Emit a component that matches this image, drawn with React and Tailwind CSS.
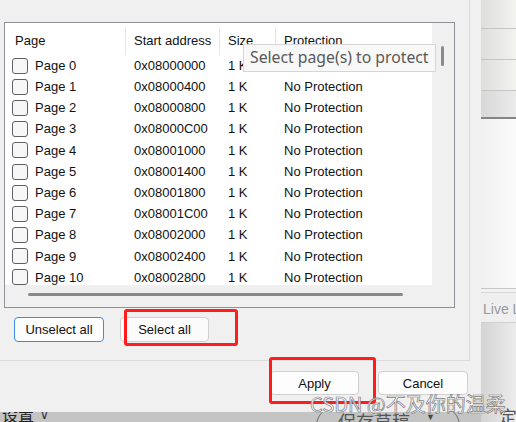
export default function App() {
  const rows = [
    ["Page 0", "0x08000000"],
    ["Page 1", "0x08000400"],
    ["Page 2", "0x08000800"],
    ["Page 3", "0x08000C00"],
    ["Page 4", "0x08001000"],
    ["Page 5", "0x08001400"],
    ["Page 6", "0x08001800"],
    ["Page 7", "0x08001C00"],
    ["Page 8", "0x08002000"],
    ["Page 9", "0x08002400"],
    ["Page 10", "0x08002800"],
  ];
  return (
    <div className="relative w-[516px] h-[422px] overflow-hidden bg-[#f0f0f0] flex font-['Liberation_Sans',Arial,sans-serif] text-[13px] text-[#111]">
      {/* left column: dialog + dimmed page below */}
      <div className="w-[481px] shrink-0 flex flex-col">
        <div className="h-[412px] flex flex-col bg-[#f0f0f0]">
          {/* panel */}
          <div className="h-[361px] w-[470px] border-r border-b border-[#dcdcdc] flex flex-col pl-[4px] pt-[22px]">
            <div className="w-[451px] h-[286px] border border-[#8f9196] flex flex-col bg-[#f0f0f0]">
              <div className="flex h-[262px]">
                <div className="w-[427px] bg-white overflow-hidden">
                  {/* header */}
                  <div className="flex h-[32px] pt-[4px]">
                    <div className="w-[121px] border-r border-[#e5e5e5] pl-[10px] flex items-center">Page</div>
                    <div className="w-[94px] border-r border-[#e5e5e5] pl-[8px] flex items-center">Start address</div>
                    <div className="w-[56px] border-r border-[#e5e5e5] pl-[8px] flex items-center">Size</div>
                    <div className="flex-1 pl-[8px] flex items-center">Protection</div>
                  </div>
                  {rows.map(([p, a]) => (
                    <div key={p} className="flex h-[21.2px] items-center">
                      <div className="w-[121px] pl-[7px] flex items-center gap-[7px]">
                        <div className="w-[16px] h-[16px] rounded-[3px] border border-[#5f5f5f] bg-[#f7f7f7]" />
                        <span>{p}</span>
                      </div>
                      <div className="w-[94px] pl-[8px]">{a}</div>
                      <div className="w-[56px] pl-[8px]">1 K</div>
                      <div className="flex-1 pl-[8px]">No Protection</div>
                    </div>
                  ))}
                </div>
                <div className="flex-1 pt-[23px] pl-[9px]">
                  <div className="w-[3px] h-[20px] rounded-full bg-[#8a8a8a]" />
                </div>
              </div>
              <div className="flex-1 pt-[8px] pl-[23px]">
                <div className="w-[375px] h-[3px] rounded-full bg-[#8a8a8a]" />
              </div>
            </div>
            <div className="flex mt-[9px] ml-[10px] gap-[16px]">
              <div className="w-[90px] h-[25px] rounded-[4px] border border-[#3a8ee6] bg-[#fdfdfd] flex items-center justify-center">Unselect all</div>
              <div className="w-[89px] h-[25px] rounded-[4px] border border-[#d0d0d0] bg-[#fbfbfb] flex items-center justify-center">Select all</div>
            </div>
          </div>
          {/* footer */}
          <div className="flex justify-end pr-[13px] pt-[10px] gap-[19px]">
            <div className="w-[89px] h-[24px] rounded-[4px] border border-[#d0d0d0] bg-[#fdfdfd] flex items-center justify-center pt-[1px]">Apply</div>
            <div className="w-[90px] h-[24px] rounded-[4px] border border-[#d0d0d0] bg-[#fdfdfd] flex items-center justify-center pt-[1px]">Cancel</div>
          </div>
        </div>
        {/* dimmed page strip */}
        <div className="relative h-[10px] bg-[#c4c4c4] overflow-hidden flex">
          <div className="-mt-[6px] ml-[2px] text-[16px] leading-[16px] text-[#222] font-['Noto_Sans_CJK_SC',sans-serif]">设置</div>
          <div className="-mt-[6px] ml-[6px] text-[12px] text-[#333]">∨</div>
          <div className="absolute left-[316px] top-[-6px] w-[144px] h-[40px] rounded-full border border-[#6a6a6a]" />
          <div className="absolute left-[338px] top-[0px] text-[18px] leading-[18px] text-[#555] font-['Noto_Sans_CJK_SC',sans-serif]">保存草稿</div>
          <div className="absolute left-[426px] top-[-1px] text-[9px] text-[#444]">▼</div>
        </div>
      </div>
      {/* right window strip */}
      <div className="flex-1 min-w-0 flex flex-col">
        <div className="h-[29px] shrink-0 bg-gradient-to-r from-[#dedede] to-[#f3f3f0] border-b border-[#c6c6c6]" />
        <div className="h-[31px] shrink-0 bg-gradient-to-r from-[#dedede] to-[#f3f3f0] border-b border-[#c6c6c6]" />
        <div className="h-[31px] shrink-0 bg-gradient-to-r from-[#dedede] to-[#f3f3f0] border-b border-[#c6c6c6]" />
        <div className="h-[28px] shrink-0 bg-gradient-to-r from-[#d8d8d8] to-[#ebebeb] border-b-2 border-[#858585]" />
        <div className="h-[170px] shrink-0 bg-gradient-to-r from-[#f0f0f0] to-[#fbfbfb] border-b border-[#c8c8c8]" />
        <div className="h-[4px] shrink-0 border-b border-[#d6d6d6] bg-[#f2f2f2]" />
        <div className="h-[30px] shrink-0 bg-[#efefef] border-b border-[#d0d0d0] flex items-center pt-[4px] pl-[2px] text-[14px] text-[#9a9a9a] whitespace-nowrap overflow-hidden">Live Load</div>
        <div className="flex-1 bg-gradient-to-r from-[#d4d4d4] to-[#ececec] relative overflow-hidden">
          <div className="absolute left-[18px] top-[84px] text-[18px] leading-[18px] text-[#555] font-['Noto_Sans_CJK_SC',sans-serif]">定</div>
        </div>
      </div>

      {/* tooltip */}
      <div className="absolute left-[243px] top-[44px] w-[193px] h-[28px] border border-[#d6d6d6] bg-[#f8f8f8] flex items-center pl-[6px] text-[15.75px] text-[#595959] font-['Noto_Sans',sans-serif] whitespace-nowrap overflow-hidden">Select page(s) to protect</div>

      {/* red annotation boxes */}
      <div className="absolute left-[124px] top-[309px] w-[114px] h-[37px] border-[3px] border-[#ff1c1c] rounded-[3px]" />
      <div className="absolute left-[269px] top-[357px] w-[107px] h-[47px] border-[3px] border-[#ff1c1c] rounded-[3px]" />

      {/* watermark */}
      <div className="absolute left-[310px] top-[391px] text-[20px] leading-[26px] whitespace-nowrap text-[rgba(255,255,255,0.85)] [-webkit-text-stroke:0.7px_#808080] font-['Noto_Sans_CJK_SC',sans-serif]">CSDN @不及你的温柔</div>
    </div>
  );
}
